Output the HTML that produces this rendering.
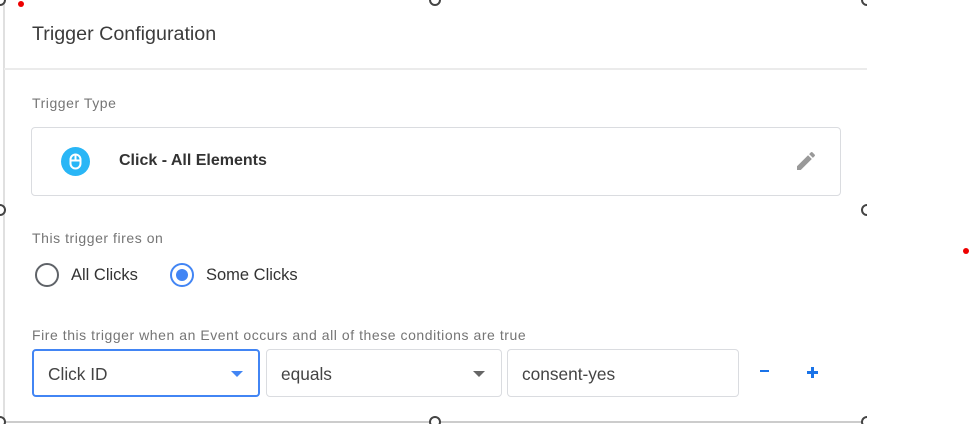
<!DOCTYPE html>
<html><head><meta charset="utf-8"><style>
*{margin:0;padding:0;box-sizing:border-box}
body{width:970px;height:424px;background:#fff;position:relative;overflow:hidden;font-family:"Liberation Sans",Arial,sans-serif;color:#202124}
.a{position:absolute}
.lbl{color:#757575;font-size:14px;letter-spacing:0.55px}
.box{position:absolute;border:1px solid #dadce0;border-radius:4px;background:#fff}
.h{position:absolute;width:12px;height:12px;border:2px solid #444;border-radius:50%;background:#fff}
.clip{position:absolute;left:0;top:0;width:867px;height:424px;overflow:hidden}
</style></head><body>
<div class="clip">
<div class="a" style="left:3px;top:0;width:2px;height:424px;background:#e0e0e0"></div>
<div class="a" style="left:4px;top:68px;width:863px;height:2px;background:#ebebeb"></div>
<div class="a" style="left:4px;top:421px;width:863px;height:2px;background:#ccc"></div>
<div class="a" style="left:32px;top:23px;font-size:19.7px;color:#3c3c3c">Trigger Configuration</div>
<div class="a lbl" style="left:32px;top:95px">Trigger Type</div>
<div class="box" style="left:31px;top:127px;width:810px;height:69px"></div>
<div class="a" style="left:61px;top:147px;width:29px;height:29px;border-radius:50%;background:#29b6f6"></div>
<svg class="a" style="left:61px;top:147px" width="29" height="29" viewBox="0 0 29 29"><rect x="9.5" y="7.5" width="10" height="14" rx="5" fill="none" stroke="#fff" stroke-width="2"/><line x1="9.5" y1="13.5" x2="19.5" y2="13.5" stroke="#fff" stroke-width="2"/><line x1="14.5" y1="8" x2="14.5" y2="13" stroke="#fff" stroke-width="2"/></svg>
<div class="a" style="left:119px;top:152px;font-size:16px;font-weight:bold;color:#333">Click - All Elements</div>
<svg class="a" style="left:794px;top:149px" width="24" height="24" viewBox="0 0 24 24"><path d="M3 17.25V21h3.75L17.81 9.94l-3.75-3.75L3 17.25zM20.71 7.04a1 1 0 000-1.41l-2.34-2.34a1 1 0 00-1.41 0l-1.83 1.83 3.75 3.75 1.83-1.83z" fill="#999"/></svg>
<div class="a lbl" style="left:32px;top:230px">This trigger fires on</div>
<div class="a" style="left:35px;top:263px;width:24px;height:24px;border:2px solid #5f6368;border-radius:50%"></div>
<div class="a" style="left:71px;top:266px;font-size:16.5px;color:#333">All Clicks</div>
<div class="a" style="left:170px;top:263px;width:24px;height:24px;border:2px solid #4285f4;border-radius:50%"></div>
<div class="a" style="left:176px;top:269px;width:12px;height:12px;background:#4285f4;border-radius:50%"></div>
<div class="a" style="left:206px;top:266px;font-size:16.5px;color:#333">Some Clicks</div>
<div class="a lbl" style="left:32px;top:327px">Fire this trigger when an Event occurs and all of these conditions are true</div>
<div class="box" style="left:32px;top:349px;width:228px;height:48px;border:2px solid #4285f4"></div>
<div class="a" style="left:48px;top:364px;font-size:17.3px;color:#444">Click ID</div>
<div class="a" style="left:231px;top:371px;width:0;height:0;border-left:6px solid transparent;border-right:6px solid transparent;border-top:6px solid #4285f4"></div>
<div class="box" style="left:266px;top:349px;width:236px;height:48px"></div>
<div class="a" style="left:281px;top:364px;font-size:17.3px;color:#444">equals</div>
<div class="a" style="left:473px;top:371px;width:0;height:0;border-left:6px solid transparent;border-right:6px solid transparent;border-top:6px solid #666"></div>
<div class="box" style="left:507px;top:349px;width:232px;height:48px"></div>
<div class="a" style="left:522px;top:364px;font-size:17.3px;color:#444">consent-yes</div>
<div class="a" style="left:760px;top:370px;width:9px;height:2px;background:#1a73e8"></div>
<div class="a" style="left:807px;top:371px;width:11px;height:2.5px;background:#1a73e8"></div>
<div class="a" style="left:811.3px;top:366.5px;width:2.5px;height:11px;background:#1a73e8"></div>
<div class="h" style="left:-6px;top:-6px"></div>
<div class="h" style="left:429px;top:-6px"></div>
<div class="h" style="left:861px;top:-6px"></div>
<div class="h" style="left:-6px;top:204px"></div>
<div class="h" style="left:861px;top:204px"></div>
<div class="h" style="left:-6px;top:416px"></div>
<div class="h" style="left:429px;top:416px"></div>
<div class="h" style="left:861px;top:416px"></div>
</div>
<div class="a" style="left:18px;top:1px;width:6px;height:6px;border-radius:50%;background:#e00"></div>
<div class="a" style="left:963px;top:248px;width:6px;height:6px;border-radius:50%;background:#e00"></div>
</body></html>
